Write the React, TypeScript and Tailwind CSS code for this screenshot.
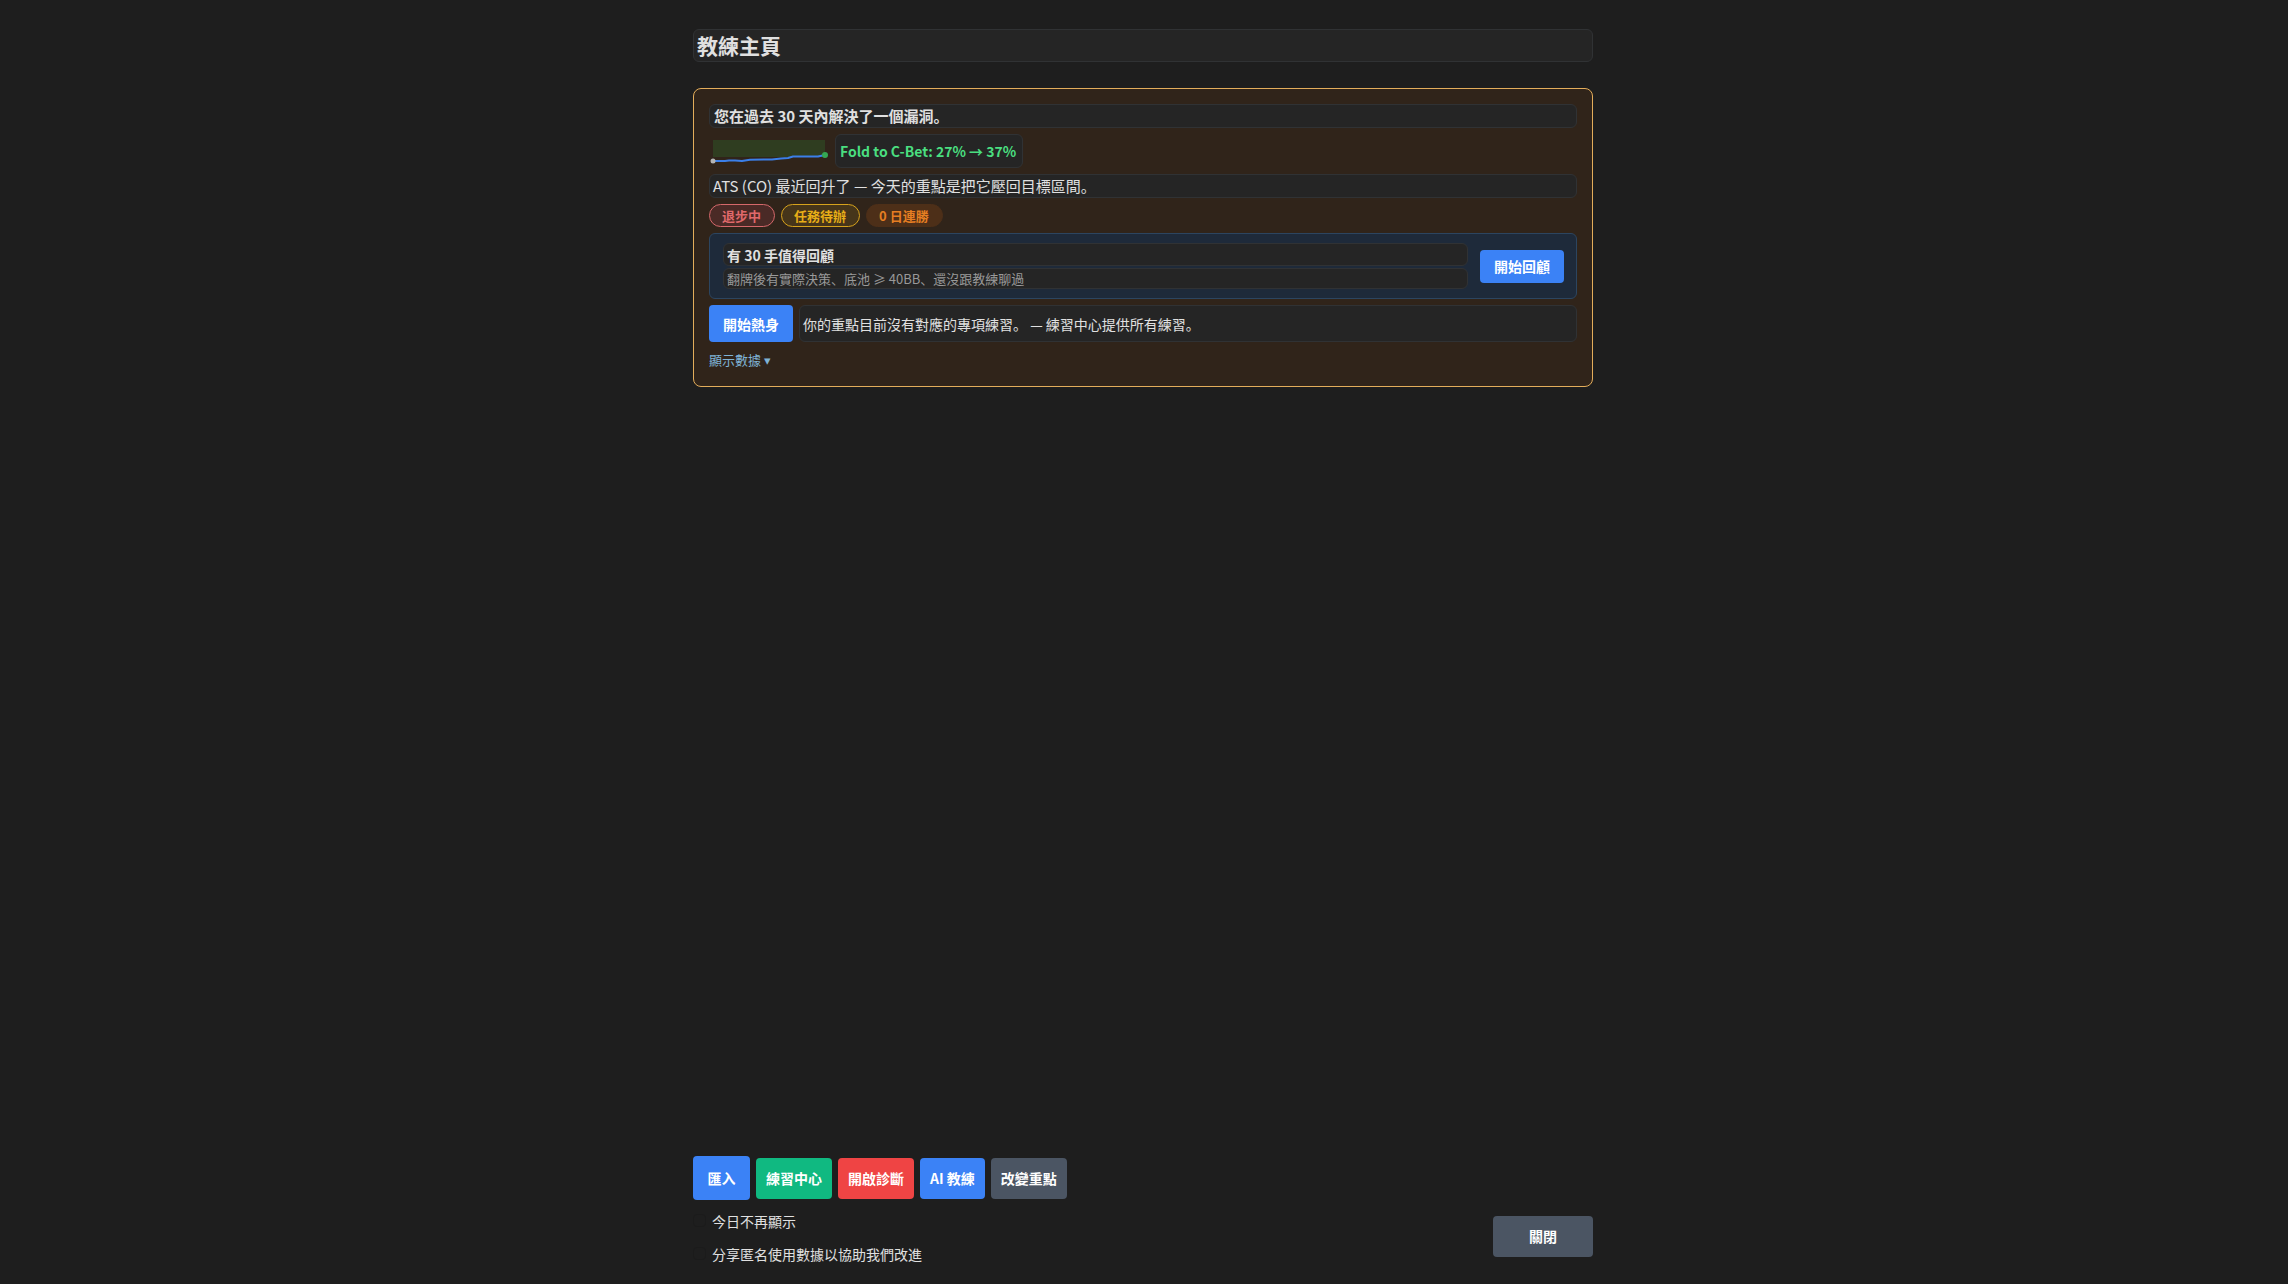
import type { ReactNode } from 'react'
import clsx from 'clsx'

interface Badge {
  label: string
  className: string
}

interface Action {
  label: string
  className: string
}

const badges: Badge[] = [
  { label: '退步中', className: 'border-[#d4686a] bg-[#4a2a26] text-[#e0696b]' },
  { label: '任務待辦', className: 'border-[#d6a21c] bg-[#46351a] text-[#e8ae17]' },
  { label: '0 日連勝', className: 'border-[#4d2f18] bg-[#4d2f18] text-[#e67e22]' },
]

const actions: Action[] = [
  { label: '匯入', className: 'h-11 w-[57px] bg-[#3b82f6]' },
  { label: '練習中心', className: 'h-[41px] px-[10px] bg-[#10b981]' },
  { label: '開啟診斷', className: 'h-[41px] px-[10px] bg-[#ef4444]' },
  { label: 'AI 教練', className: 'h-[41px] px-[10px] bg-[#3b82f6]' },
  { label: '改變重點', className: 'h-[41px] px-[10px] bg-[#4b5563]' },
]

function Field({ className, children }: { className?: string; children: ReactNode }) {
  return (
    <div className={clsx('flex items-center rounded-md border border-[#303234] bg-[#252525]', className)}>
      {children}
    </div>
  )
}

function Sparkline() {
  return (
    <svg width="120" height="34" viewBox="0 0 120 34" className="shrink-0">
      <rect x="4" y="6" width="112" height="17" fill="#2f3d20" />
      <polyline
        points="4,27 16,27 20,26.5 26,26.5 33,27 41,25.7 63,25.5 72,24.5 79,24 84,22.5 109,22.5 116,21"
        fill="none"
        stroke="#3b7fe8"
        strokeWidth="2"
        strokeLinejoin="round"
      />
      <circle cx="4" cy="27" r="2.5" fill="#b4b4b4" />
      <circle cx="116" cy="21" r="3" fill="#34a853" />
    </svg>
  )
}

function CheckRow({ id, label }: { id: string; label: string }) {
  return (
    <div className="flex h-[27px] items-center gap-[6px]">
      <input id={id} type="checkbox" className="size-[13px] appearance-none rounded-sm border border-[#1b1b1b] bg-[#1e1e1e]" />
      <label htmlFor={id} className="text-sm">{label}</label>
    </div>
  )
}

export default function App() {
  return (
    <div className="flex min-h-screen flex-col bg-[#1e1e1e] pt-[29px] pr-[18px] pb-[17px] pl-4 font-['Noto_Sans_CJK_SC',sans-serif] text-[#e0e0e0]">
      <div className="mx-auto flex w-full max-w-[900px] flex-1 flex-col">
        <Field className="h-[33px] px-[3px]">
          <h1 className="text-[21px] font-bold">教練主頁</h1>
        </Field>

        <main className="mt-[26px] flex flex-col gap-[6px] rounded-lg border border-[#e3ad5b] bg-[#30241a] p-[15px]">
          <Field className="h-6 px-1">
            <h2 className="text-[15px] font-bold">您在過去 30 天內解決了一個漏洞。</h2>
          </Field>

          <div className="flex items-center gap-[6px]">
            <Sparkline />
            <Field className="h-[34px] pr-[6px] pl-1">
              <span className="text-sm font-bold text-[#4ade80]">Fold to C-Bet: 27% → 37%</span>
            </Field>
          </div>

          <Field className="h-6 px-[3px]">
            <p className="text-[15px]">ATS (CO) 最近回升了 — 今天的重點是把它壓回目標區間。</p>
          </Field>

          <div className="flex gap-[6px]">
            {badges.map(badge => (
              <span
                key={badge.label}
                className={clsx('flex h-[23px] items-center rounded-full border pr-[13px] pl-3 text-[13px] font-bold', badge.className)}
              >
                {badge.label}
              </span>
            ))}
          </div>

          <section className="flex items-center gap-3 rounded-md border border-[#2c4560] bg-[#1e2a3a] py-[9px] pr-3 pl-[13px]">
            <div className="flex flex-1 flex-col gap-[2px]">
              <Field className="h-[23px] px-[3px]">
                <h3 className="text-sm font-bold">有 30 手值得回顧</h3>
              </Field>
              <Field className="h-[21px] px-[3px]">
                <p className="text-[13px] text-[#999999]">翻牌後有實際決策、底池 ≥ 40BB、還沒跟教練聊過</p>
              </Field>
            </div>
            <button className="h-[33px] rounded bg-[#3b82f6] px-[14px] text-sm font-bold text-white">開始回顧</button>
          </section>

          <div className="flex items-center gap-[6px]">
            <button className="h-[37px] shrink-0 rounded bg-[#3b82f6] px-[14px] text-sm font-bold text-white">開始熱身</button>
            <Field className="h-[37px] flex-1 px-[3px]">
              <p className="text-sm">你的重點目前沒有對應的專項練習。 — 練習中心提供所有練習。</p>
            </Field>
          </div>

          <button className="h-[23px] self-start text-[13px] text-[#7fb3d5]">顯示數據 ▾</button>
        </main>

        <footer className="mt-auto">
          <div className="flex items-center gap-[6px]">
            {actions.map(action => (
              <button key={action.label} className={clsx('rounded text-sm font-bold text-white', action.className)}>
                {action.label}
              </button>
            ))}
          </div>
          <div className="mt-[7px] flex items-center justify-between">
            <div className="flex flex-col gap-[6px]">
              <CheckRow id="hide-today" label="今日不再顯示" />
              <CheckRow id="share-usage" label="分享匿名使用數據以協助我們改進" />
            </div>
            <button className="mb-[2px] h-[41px] w-[100px] rounded bg-[#4b5563] text-sm font-bold text-white">關閉</button>
          </div>
        </footer>
      </div>
    </div>
  )
}
